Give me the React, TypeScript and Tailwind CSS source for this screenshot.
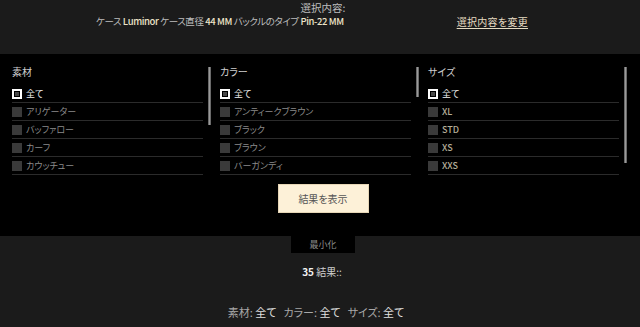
import React from "react";

const F = "font-['Noto_Sans_CJK_JP','Noto_Sans',sans-serif] [font-feature-settings:'palt']";

type Item = { label: string; selected?: boolean; latin?: boolean };

const cols: { title: string; items: Item[]; bar: string }[] = [
  {
    title: "素材",
    bar: "h-[58px]",
    items: [
      { label: "全て", selected: true },
      { label: "アリゲーター" },
      { label: "バッファロー" },
      { label: "カーフ" },
      { label: "カウッチュー" },
    ],
  },
  {
    title: "カラー",
    bar: "h-[30px]",
    items: [
      { label: "全て", selected: true },
      { label: "アンティークブラウン" },
      { label: "ブラック" },
      { label: "ブラウン" },
      { label: "バーガンディ" },
    ],
  },
  {
    title: "サイズ",
    bar: "h-[96px]",
    items: [
      { label: "全て", selected: true },
      { label: "XL", latin: true },
      { label: "STD", latin: true },
      { label: "XS", latin: true },
      { label: "XXS", latin: true },
    ],
  },
];

function Check({ on }: { on?: boolean }) {
  if (on)
    return (
      <div className="w-[10px] h-[10px] border-2 border-white bg-black flex items-center justify-center shrink-0">
        <div className="w-[4px] h-[4px] bg-[#4a4a4a]" />
      </div>
    );
  return <div className="w-[10px] h-[10px] bg-[#3a3a3a] shrink-0" />;
}

export default function App() {
  return (
    <div className={`w-[640px] h-[327px] bg-[#1b1b1b] overflow-hidden ${F}`}>
      {/* top */}
      <div className="h-[54px] pt-[1px] text-[10.5px] leading-[13px] text-[#bdbdbd]">
        <div className="text-center pl-[6px]">選択内容:</div>
        <div className="flex items-center pl-[96px] mt-[1px]">
          <span className="whitespace-nowrap tracking-[-0.4px] text-[9.5px]">
            ケース <span className="font-medium text-[#ece3c8]">Luminor</span> ケース直径{" "}
            <span className="font-medium text-[#ece3c8]">44 MM</span> バックルのタイプ{" "}
            <span className="font-medium text-[#ece3c8]">Pin-22 MM</span>
          </span>
          <span className="ml-auto mr-[112px] underline underline-offset-2 text-[#e6dcc2] text-[10px] tracking-[0.3px]">
            選択内容を変更
          </span>
        </div>
      </div>

      {/* filters */}
      <div className="bg-black h-[182px] pt-3 flex flex-col">
        <div className="grid grid-cols-3 gap-2 px-3">
          {cols.map((c) => (
            <div key={c.title} className="flex">
              <div className="flex-1 pr-[3px]">
                <div className="text-[10px] leading-[12px] text-[#cfcfcf] mb-[7px]">{c.title}</div>
                {c.items.map((it) => (
                  <div
                    key={it.label}
                    className="h-[18px] flex items-center gap-[4px] border-b border-[#2b2b2b]"
                  >
                    <Check on={it.selected} />
                    <span
                      className={`text-[9px] ${
                        it.selected
                          ? "text-[#f0f0f0]"
                          : it.latin
                          ? "text-[#b5ae98] font-medium"
                          : "text-[#8a8a8a]"
                      }`}
                    >
                      {it.label}
                    </span>
                  </div>
                ))}
              </div>
              <div className="w-[6px] flex justify-center pt-[1px]">
                <div className={`w-[3px] ${c.bar} bg-[#9a9a9a] border-x border-[#6a6a6a]`} />
              </div>
            </div>
          ))}
        </div>
        <div className="flex justify-center mt-[9px] pl-[6px]">
          <button className="w-[91px] h-[29px] bg-[#fdf1d8] border border-[#e6d6b6] text-[10px] text-[#555]">
            結果を表示
          </button>
        </div>
      </div>

      {/* bottom */}
      <div className="flex flex-col items-center">
        <div className="w-[64px] h-[17px] ml-[6px] bg-black text-[9px] text-[#8c8c8c] flex items-center justify-center">
          最小化
        </div>
        <div className="mt-[11px] text-[10px] text-[#cfcfcf] pl-[4px]">
          <span className="font-bold text-[#f2f2f2]">35</span> 結果::
        </div>
        <div className="mt-[25px] text-[11px] text-[#a8a8a8] pr-[8px]">
          素材: <span className="text-[#e0e0e0]">全て</span>
          <span className="ml-[7px]">カラー: </span>
          <span className="text-[#e0e0e0]">全て</span>
          <span className="ml-[7px]">サイズ: </span>
          <span className="text-[#e0e0e0]">全て</span>
        </div>
      </div>
    </div>
  );
}
